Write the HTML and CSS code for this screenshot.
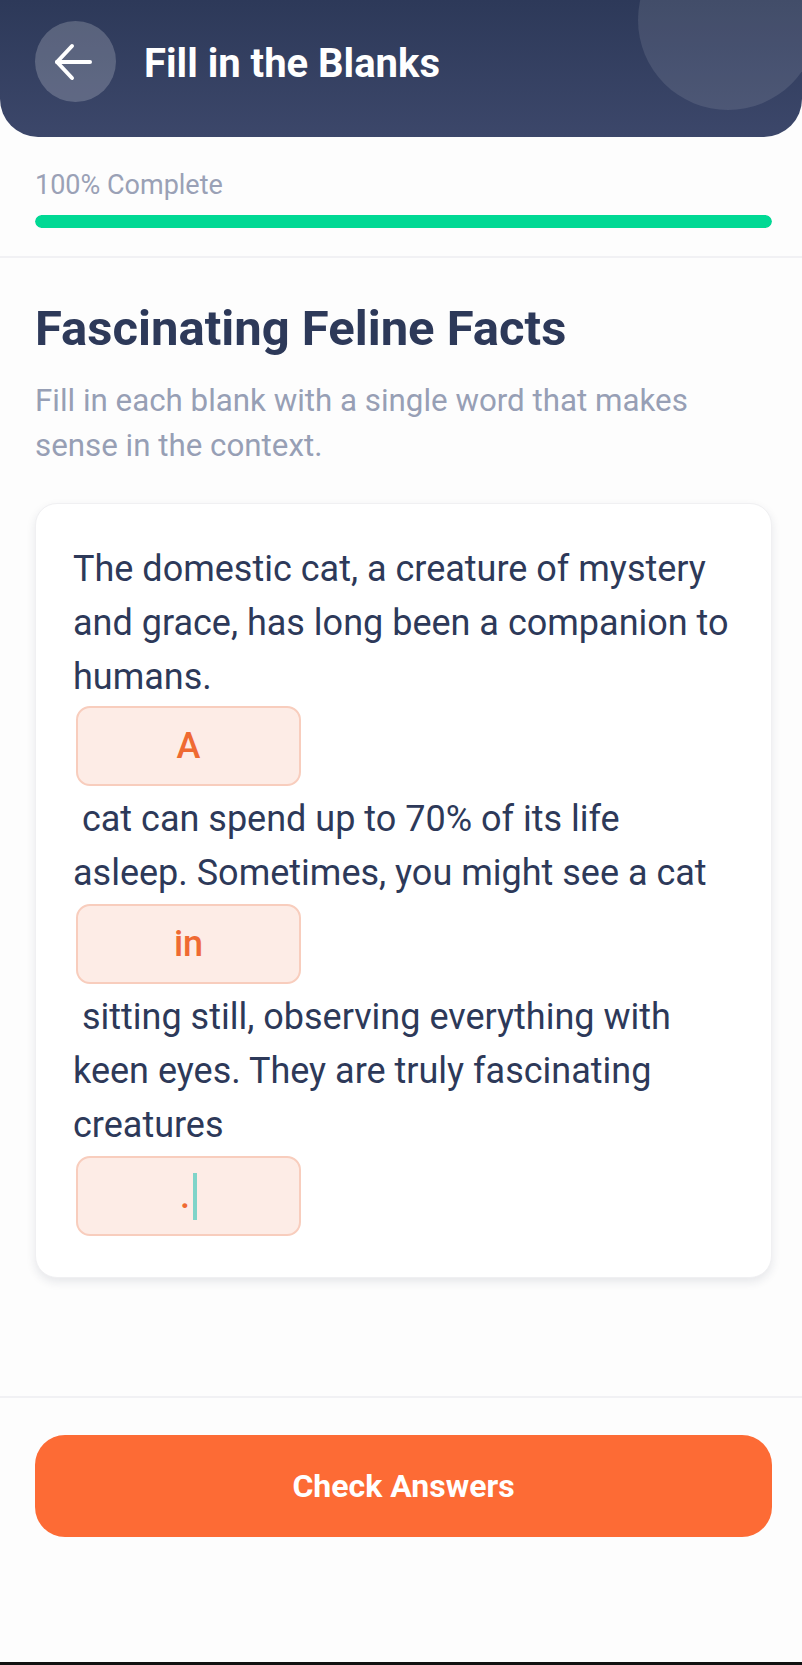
FILE: index.html
```html
<!DOCTYPE html>
<html lang="en">
<head>
<meta charset="utf-8">
<title>Fill in the Blanks</title>
<link rel="stylesheet" href="styles.css">
</head>
<body>
<div class="page">
  <header class="header">
    <div class="header-deco"></div>
    <div class="header-row">
      <button class="back-btn" aria-label="Back">
        <svg width="40" height="40" viewBox="0 0 40 40" fill="none" stroke="#ffffff" stroke-width="4" stroke-linecap="round" stroke-linejoin="round">
          <path d="M36 20 H3"/>
          <path d="M18 4 L3 20 L18 36"/>
        </svg>
      </button>
      <h1 class="header-title">Fill in the Blanks</h1>
    </div>
  </header>

  <section class="progress">
    <div class="progress-label">100% Complete</div>
    <div class="progress-track"><div class="progress-fill" style="width:100%"></div></div>
  </section>

  <main class="content">
    <h2 class="exercise-title">Fascinating Feline Facts</h2>
    <p class="exercise-sub">Fill in each blank with a single word that makes sense in the context.</p>

    <div class="card">
      <span class="passage">The domestic cat, a creature of mystery and grace, has long been a companion to humans.</span>
      <div class="blank"><span class="blank-text">A</span></div>
      <span class="passage"> cat can spend up to 70% of its life asleep. Sometimes, you might see a cat</span>
      <div class="blank"><span class="blank-text">in</span></div>
      <span class="passage"> sitting still, observing everything with keen eyes. They are truly fascinating creatures</span>
      <div class="blank"><span class="blank-text">.</span><span class="caret"></span></div>
    </div>
  </main>

  <footer class="footer">
    <button class="check-btn">Check Answers</button>
  </footer>
  <div class="nav-strip"></div>
</div>
</body>
</html>
```

FILE: styles.css
```css
* { box-sizing: border-box; }

html, body {
  margin: 0;
  padding: 0;
  background: #fdfdfd;
  font-family: Roboto, "Noto Sans", "Liberation Sans", sans-serif;
}

.page {
  width: 802px;
  min-height: 1665px;
  display: flex;
  flex-direction: column;
  overflow: hidden;
}

/* Header */
.header {
  position: relative;
  height: 137px;
  padding: 21px 35px 0 35px;
  background: linear-gradient(180deg, #2d3959 0%, #3c476a 100%);
  border-radius: 0 0 38px 38px;
  overflow: hidden;
}

.header-deco {
  position: absolute;
  left: 638px;
  top: -70px;
  width: 180px;
  height: 180px;
  border-radius: 50%;
  background: rgba(255, 255, 255, 0.1);
}

.header-row {
  display: flex;
  align-items: center;
  gap: 28px;
}

.back-btn {
  width: 81px;
  height: 81px;
  border: none;
  border-radius: 50%;
  background: rgba(255, 255, 255, 0.2);
  display: flex;
  align-items: center;
  justify-content: center;
  padding: 0 4px 0 0;
}

.header-title {
  margin: 0;
  padding-top: 4px;
  color: #ffffff;
  font-size: 40px;
  font-weight: 700;
  line-height: 46px;
}

/* Progress */
.progress {
  padding: 33px 30px 28px 35px;
  border-bottom: 2px solid #f1f1f4;
}

.progress-label {
  font-size: 27px;
  line-height: 30px;
  color: #9aa1b6;
}

.progress-track {
  margin-top: 15px;
  height: 13px;
  border-radius: 7px;
  background: #e8ebf0;
  overflow: hidden;
}

.progress-fill {
  height: 100%;
  border-radius: 7px;
  background: #00d994;
}

/* Content */
.content {
  padding: 43px 30px 0 35px;
}

.exercise-title {
  margin: 0;
  font-size: 49px;
  line-height: 56px;
  font-weight: 700;
  color: #2d3959;
}

.exercise-sub {
  margin: 21px 0 0 0;
  max-width: 700px;
  font-size: 31.3px;
  line-height: 45px;
  color: #979fb5;
}

.card {
  margin-top: 35px;
  width: 737px;
  padding: 38px 40px 35px 37px;
  background: #ffffff;
  border: 1px solid #f0f0f2;
  border-radius: 22px;
  box-shadow: 0 4px 10px rgba(30, 40, 70, 0.10);
  display: flex;
  flex-direction: column;
  align-items: flex-start;
}

.passage {
  display: block;
  white-space: pre-wrap;
  font-size: 36px;
  line-height: 54px;
  color: #2d3959;
}

.blank {
  margin: 4px 0 6px 3px;
  width: 225px;
  height: 80px;
  border: 2px solid #f8cdbd;
  border-radius: 14px;
  background: #fdece6;
  display: flex;
  align-items: center;
  justify-content: center;
}

.card > .blank:first-of-type {
  margin-top: 2px;
}

.blank-text {
  font-size: 36px;
  font-weight: 500;
  color: #ef6a32;
}

.caret {
  display: inline-block;
  width: 4px;
  height: 47px;
  margin-left: 3px;
  background: #7fd4c9;
}

/* Footer */
.footer {
  margin-top: auto;
  padding: 37px 30px 125px 35px;
  border-top: 2px solid #f1f1f4;
}

.check-btn {
  width: 737px;
  height: 102px;
  border: none;
  border-radius: 30px;
  background: #fd6b35;
  color: #ffffff;
  font-family: Roboto, "Noto Sans", "Liberation Sans", sans-serif;
  font-size: 32px;
  font-weight: 700;
}

.nav-strip {
  height: 3px;
  background: #111111;
}
```
